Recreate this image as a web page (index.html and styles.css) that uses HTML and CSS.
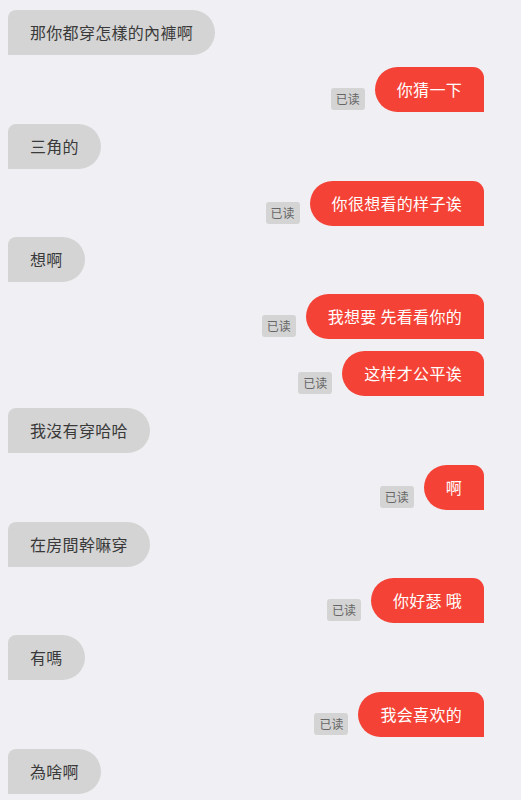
FILE: index.html
```html
<!DOCTYPE html>
<html lang="zh">

<head>
  <meta charset="UTF-8" />
  <meta name="viewport" content="width=device-width, initial-scale=1.0" />
  <title>聊天</title>
  <link rel="stylesheet" href="styles.css">
</head>

<body>
  <div class="chat">
    <div class="msg"><div class="bubble">那你都穿怎樣的內褲啊</div></div>
    <div class="msg mine"><span class="read">已读</span><div class="bubble">你猜一下</div></div>
    <div class="msg"><div class="bubble">三角的</div></div>
    <div class="msg mine"><span class="read">已读</span><div class="bubble">你很想看的样子诶</div></div>
    <div class="msg"><div class="bubble">想啊</div></div>
    <div class="msg mine"><span class="read">已读</span><div class="bubble">我想要 先看看你的</div></div>
    <div class="msg mine"><span class="read">已读</span><div class="bubble">这样才公平诶</div></div>
    <div class="msg"><div class="bubble">我沒有穿哈哈</div></div>
    <div class="msg mine"><span class="read">已读</span><div class="bubble">啊</div></div>
    <div class="msg"><div class="bubble">在房間幹嘛穿</div></div>
    <div class="msg mine"><span class="read">已读</span><div class="bubble">你好瑟 哦</div></div>
    <div class="msg"><div class="bubble">有嗎</div></div>
    <div class="msg mine"><span class="read">已读</span><div class="bubble">我会喜欢的</div></div>
    <div class="msg"><div class="bubble">為啥啊</div></div>
  </div>
</body>

</html>
```

FILE: styles.css
```css
body {
  margin: 0;
  background: #efeff4;
  font-family: "Noto Sans CJK SC", "Noto Sans", sans-serif;
}

.chat {
  display: flex;
  flex-direction: column;
  gap: 11.85px;
  padding: 10px 37px 0 8px;
}

.msg {
  display: flex;
  align-items: flex-end;
}

.msg.mine {
  justify-content: flex-end;
}

.bubble {
  height: 45px;
  line-height: 45px;
  padding: 0 22px;
  font-size: 16px;
  letter-spacing: 0.3px;
  color: #3a3a3a;
  background: #d4d4d4;
  border-radius: 8px 22.5px 22.5px 0;
  white-space: nowrap;
}

.mine .bubble {
  color: #fff;
  background: #f44336;
  border-radius: 22.5px 11px 0 22.5px;
}

.read {
  margin: 0 10px 2px 0;
  padding: 0 5px;
  height: 22px;
  line-height: 22px;
  font-size: 12px;
  color: #666;
  background: #d4d4d4;
  border-radius: 3px;
}
```
